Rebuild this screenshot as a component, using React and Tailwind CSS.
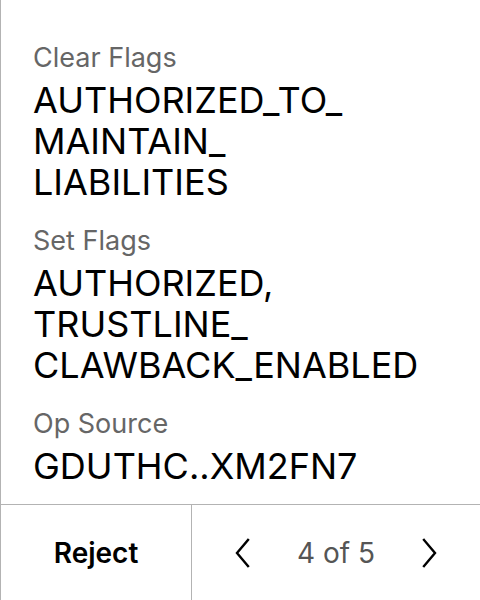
import React from "react";

function Chevron({ dir }) {
  return (
    <svg width="18" height="30" viewBox="0 0 18 30" fill="none" stroke="#000" strokeWidth="2.4" strokeLinecap="square">
      {dir === "left" ? <path d="M14 2 L3 15 L14 28" /> : <path d="M4 2 L15 15 L4 28" />}
    </svg>
  );
}

function Field({ label, lines }) {
  return (
    <div className="flex flex-col gap-[6px]">
      <div className="text-[27px] leading-[32px] text-[#666666]">{label}</div>
      <div className="flex flex-col text-[36px] leading-[41px] text-black">
        {lines.map((l) => (
          <span key={l} className="whitespace-nowrap">{l}</span>
        ))}
      </div>
    </div>
  );
}

export default function App() {
  return (
    <div
      className="w-[480px] h-[600px] bg-white flex flex-col border-l border-[#b3b3b3]"
      style={{ fontFamily: "Inter, 'Noto Sans', sans-serif" }}
    >
      <div className="flex-1 flex flex-col gap-[22px] pl-[32px] pr-[20px] pt-[42px]">
        <Field label="Clear Flags" lines={["AUTHORIZED_TO_", "MAINTAIN_", "LIABILITIES"]} />
        <Field label="Set Flags" lines={["AUTHORIZED,", "TRUSTLINE_", "CLAWBACK_ENABLED"]} />
        <Field label="Op Source" lines={["GDUTHC..XM2FN7"]} />
      </div>
      <div className="h-[96px] flex border-t border-[#b3b3b3]">
        <div className="w-[191px] flex items-center justify-center border-r border-[#b3b3b3] text-[28px] font-semibold text-black">
          Reject
        </div>
        <div className="flex-1 flex items-center justify-between px-[42px]">
          <Chevron dir="left" />
          <span className="text-[28px] text-[#555555]">4 of 5</span>
          <Chevron dir="right" />
        </div>
      </div>
    </div>
  );
}
